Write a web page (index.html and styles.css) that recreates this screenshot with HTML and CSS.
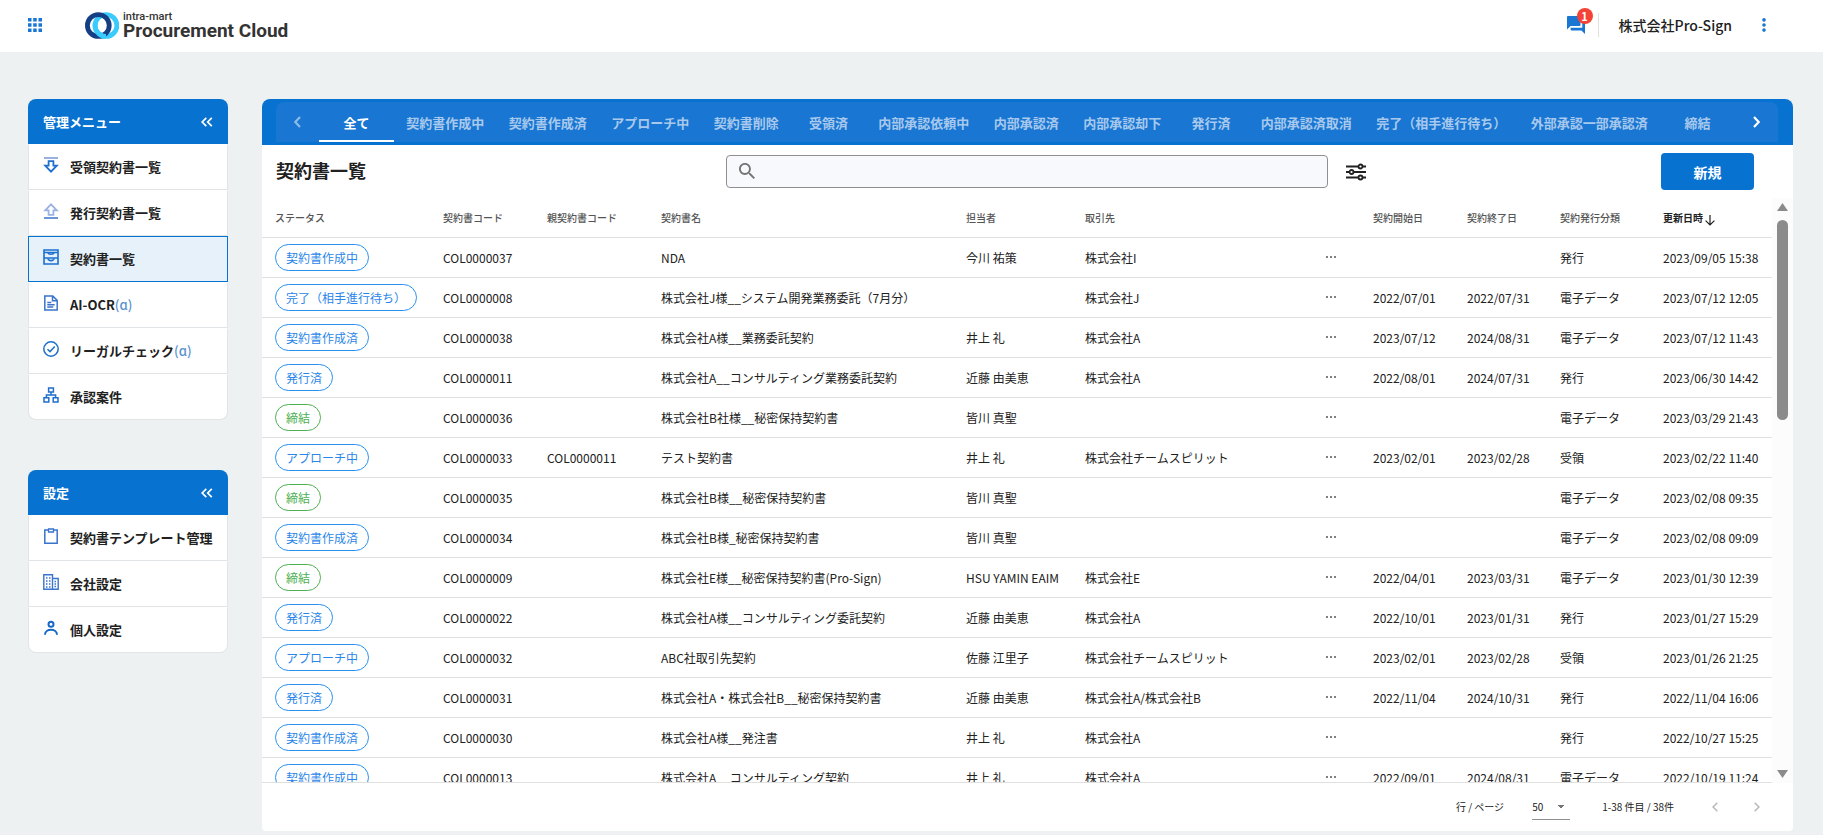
FILE: index.html
```html
<!DOCTYPE html>
<html lang="ja">
<head>
<meta charset="utf-8">
<meta name="viewport" content="width=device-width, initial-scale=1">
<title>契約書一覧 - Procurement Cloud</title>
<link rel="stylesheet" href="styles.css">
</head>
<body>
<header class="topbar">
  <button class="icon-btn" type="button" aria-label="アプリ一覧">
    <svg width="14" height="14" viewBox="0 0 14 14" fill="#1976d2"><path d="M0 0h3.5v3.5H0zM5.2 0h3.5v3.5H5.2zM10.5 0H14v3.5h-3.5zM0 5.2h3.5v3.5H0zM5.2 5.2h3.5v3.5H5.2zM10.5 5.2H14v3.5h-3.5zM0 10.5h3.5V14H0zM5.2 10.5h3.5V14H5.2zM10.5 10.5H14V14h-3.5z"/></svg>
  </button>
  <a class="brand" href="#">
    <svg width="34" height="27" viewBox="0 0 34 27" fill="none" stroke-width="4.800">
      <circle cx="21" cy="13.500" r="10.900" stroke="#3acbfd"/>
      <circle cx="13.300" cy="13.500" r="10.900" stroke="#153f85"/>
      <path d="M10.500 10.500A10.900 10.900 0 0 0 21 24.400" stroke="#3acbfd"/>
    </svg>
    <span class="brand-text"><span class="brand-sub">intra-mart</span><span class="brand-name">Procurement Cloud</span></span>
  </a>
  <div class="account">
    <button class="icon-btn messages" type="button" aria-label="メッセージ 1件">
      <svg width="18" height="18" viewBox="2 2 20 20" fill="#1976d2"><path d="M21 6h-2v9H6v2c0 .55.45 1 1 1h11l4 4V7c0-.55-.45-1-1-1zm-4 6V3c0-.55-.45-1-1-1H3c-.55 0-1 .45-1 1v14l4-4h10c.55 0 1-.45 1-1z"/></svg>
      <span class="badge">1</span>
    </button>
    <span class="company">株式会社Pro-Sign</span>
    <button class="icon-btn" type="button" aria-label="メニュー">
      <svg width="4" height="14" viewBox="0 0 4 14" fill="#1976d2"><circle cx="2" cy="1.9" r="1.8"/><circle cx="2" cy="7" r="1.8"/><circle cx="2" cy="12.1" r="1.8"/></svg>
    </button>
  </div>
</header>

<div class="layout">
  <aside class="sidebar">
    <nav class="menu" aria-label="管理メニュー">
      <div class="menu-head"><span>管理メニュー</span>
        <button class="icon-btn" type="button" aria-label="折りたたむ"><svg width="12" height="10" viewBox="0 0 12 10" fill="none" stroke="#fff" stroke-width="1.7"><path d="M5.3.8 1.2 5l4.1 4.2M10.8.8 6.7 5l4.1 4.2"/></svg></button>
      </div>
      <a class="menu-item" href="#">
        <svg class="ico" viewBox="0 0 16 16" fill="none" stroke="#1f6fd0" stroke-width="1.8"><path d="M1 1h14" stroke="#8fa9dc"/><path d="M5.6 4.200h4.8v4.4h3.4L8 14.6 2.2 8.600h3.400z"/></svg>
        <span>受領契約書一覧</span></a>
      <a class="menu-item" href="#">
        <svg class="ico" viewBox="0 0 16 16" fill="none" stroke="#9bb3e2" stroke-width="1.8"><path d="M1 15h14" stroke="#5c8ad4"/><path d="M5.600 11.800h4.800V7.400h3.400L8 1.400 2.200 7.400h3.400z"/></svg>
        <span>発行契約書一覧</span></a>
      <a class="menu-item is-active" href="#" aria-current="page">
        <svg class="ico" viewBox="0 0 16 16" fill="none" stroke="#1d6fd0" stroke-width="1.600"><path d="M1 1h14v14H1zM1 3.500h14M1 9h14"/><path d="M5 3.500c.3 2.400 5.700 2.400 6 0M5 9.500c.3 2.800 5.700 2.800 6 0"/></svg>
        <span>契約書一覧</span></a>
      <a class="menu-item" href="#">
        <svg class="ico" viewBox="0 0 16 16" fill="none" stroke="#3a74cc" stroke-width="1.500"><path d="M1.800 1h8l4.400 4.400V15H1.800zM9.500 1v4.700h4.700M4.300 7.500h4M4.300 9.800h7.400M4.300 12.100h6"/></svg>
        <span>AI-OCR<span class="alpha">(ɑ)</span></span></a>
      <a class="menu-item" href="#">
        <svg class="ico" viewBox="0 0 16 16" fill="none" stroke="#1f6fcb" stroke-width="1.500"><circle cx="8" cy="8" r="7.200"/><path d="M4.500 8.200 7 10.600l4.800-5"/></svg>
        <span>リーガルチェック<span class="alpha">(ɑ)</span></span></a>
      <a class="menu-item" href="#">
        <svg class="ico" viewBox="0 0 16 16" fill="none" stroke="#1f6fcb" stroke-width="1.500"><path d="M5.600 1h4.800v4H5.600zM1 10.800h4.800V15H1zM10.200 10.800H15V15h-4.800zM8 5v2.900M3.400 10.800V7.900h9.200v2.900"/></svg>
        <span>承認案件</span></a>
    </nav>
    <nav class="menu" aria-label="設定">
      <div class="menu-head"><span>設定</span>
        <button class="icon-btn" type="button" aria-label="折りたたむ"><svg width="12" height="10" viewBox="0 0 12 10" fill="none" stroke="#fff" stroke-width="1.7"><path d="M5.3.8 1.2 5l4.1 4.2M10.8.8 6.7 5l4.1 4.2"/></svg></button>
      </div>
      <a class="menu-item" href="#">
        <svg class="ico" viewBox="0 0 16 16" fill="none" stroke="#3a74cc" stroke-width="1.500"><path d="M5.500 2H1.800v13.200h12.400V2h-3.700"/><path d="M5.500 1h5v3h-5z" stroke-width="1.300"/></svg>
        <span>契約書テンプレート管理</span></a>
      <a class="menu-item" href="#">
        <svg class="ico" viewBox="0 0 16 16" fill="none" stroke="#3a74cc" stroke-width="1.400"><path d="M.8.8h8.700v14.400H.8zM9.500 4.500h5.700v10.700H9.500"/><path d="M3 4h1.500M6 4h1.500M3 7h1.500M6 7h1.500M3 10h1.500M6 10h1.500M3 13h1.500M6 13h1.500M11.500 7.500H13M11.500 10H13M11.500 12.500H13"/></svg>
        <span>会社設定</span></a>
      <a class="menu-item" href="#">
        <svg class="ico" viewBox="0 0 16 16" fill="none" stroke="#1668c4" stroke-width="2"><circle cx="8" cy="4.300" r="2.500"/><path d="M2 14.800c0-6.700 12-6.700 12 0"/></svg>
        <span>個人設定</span></a>
    </nav>
  </aside>

  <main class="panel">
    <div class="tabs-frame">
      <div class="tabs">
        <button class="tab-scroll is-off" type="button" aria-label="前のタブ"><svg width="7" height="12" viewBox="0 0 7 12" fill="none" stroke="#fff" stroke-width="2.200"><path d="M6 1 1.300 6 6 11"/></svg></button>
        <div class="tab-list" role="tablist">
          <button class="tab is-selected" type="button" role="tab" aria-selected="true">全て</button>
          <button class="tab" type="button" role="tab">契約書作成中</button>
          <button class="tab" type="button" role="tab">契約書作成済</button>
          <button class="tab" type="button" role="tab">アプローチ中</button>
          <button class="tab" type="button" role="tab">契約書削除</button>
          <button class="tab" type="button" role="tab">受領済</button>
          <button class="tab" type="button" role="tab">内部承認依頼中</button>
          <button class="tab" type="button" role="tab">内部承認済</button>
          <button class="tab" type="button" role="tab">内部承認却下</button>
          <button class="tab" type="button" role="tab">発行済</button>
          <button class="tab" type="button" role="tab">内部承認済取消</button>
          <button class="tab" type="button" role="tab">完了（相手進行待ち）</button>
          <button class="tab" type="button" role="tab">外部承認一部承認済</button>
          <button class="tab" type="button" role="tab">締結</button>
        </div>
        <button class="tab-scroll" type="button" aria-label="次のタブ"><svg width="7" height="12" viewBox="0 0 7 12" fill="none" stroke="#fff" stroke-width="2.200"><path d="M1 1l4.700 5L1 11"/></svg></button>
      </div>
    </div>

    <div class="toolbar">
      <h1 class="title">契約書一覧</h1>
      <div class="search-group">
        <label class="search">
          <svg width="16" height="16" viewBox="3 3 17.500 17.500" fill="#757575"><path d="M15.500 14h-.79l-.28-.27C15.410 12.590 16 11.110 16 9.500 16 5.910 13.090 3 9.500 3S3 5.910 3 9.500 5.910 16 9.500 16c1.610 0 3.090-.59 4.230-1.570l.27.28v.79l5 4.990L20.490 19l-4.990-5zm-6 0C7.010 14 5 11.990 5 9.500S7.010 5 9.500 5 14 7.010 14 9.500 11.990 14 9.500 14z"/></svg>
          <input class="search-input" type="search" aria-label="検索">
        </label>
        <button class="icon-btn" type="button" aria-label="絞り込み">
          <svg width="20" height="18" viewBox="0 0 20 18" fill="#fff" stroke="#212121" stroke-width="1.800"><path d="M0 3.500h20M0 9h20M0 14.500h20"/><circle cx="14.500" cy="3.500" r="2"/><circle cx="5.500" cy="9" r="2"/><circle cx="14.500" cy="14.500" r="2"/></svg>
        </button>
      </div>
      <div class="toolbar-end"><button class="new-btn" type="button">新規</button></div>
    </div>

    <div class="grid-area">
      <div class="grid-view">
      <table class="grid">
        <colgroup><col class="c-status"><col class="c-code"><col class="c-parent"><col class="c-name"><col class="c-person"><col class="c-partner"><col class="c-more"><col class="c-start"><col class="c-end"><col class="c-type"><col class="c-updated"></colgroup>
        <thead><tr><th>ステータス</th><th>契約書コード</th><th>親契約書コード</th><th>契約書名</th><th>担当者</th><th>取引先</th><th></th><th>契約開始日</th><th>契約終了日</th><th>契約発行分類</th><th class="sorted" aria-sort="descending">更新日時<svg class="sort" width="10" height="11" viewBox="0 0 10 11" fill="none" stroke="#212121" stroke-width="1.200"><path d="M5 0v10M.6 5.600 5 10l4.400-4.400"/></svg></th></tr></thead>
        <tbody>
          <tr><td><span class="chip">契約書作成中</span></td><td>COL0000037</td><td></td><td>NDA</td><td>今川 祐策</td><td>株式会社I</td><td><button class="more" type="button" aria-label="詳細"></button></td><td></td><td></td><td>発行</td><td>2023/09/05 15:38</td></tr>
          <tr><td><span class="chip">完了（相手進行待ち）</span></td><td>COL0000008</td><td></td><td>株式会社J様__システム開発業務委託（7月分）</td><td></td><td>株式会社J</td><td><button class="more" type="button" aria-label="詳細"></button></td><td>2022/07/01</td><td>2022/07/31</td><td>電子データ</td><td>2023/07/12 12:05</td></tr>
          <tr><td><span class="chip">契約書作成済</span></td><td>COL0000038</td><td></td><td>株式会社A様__業務委託契約</td><td>井上 礼</td><td>株式会社A</td><td><button class="more" type="button" aria-label="詳細"></button></td><td>2023/07/12</td><td>2024/08/31</td><td>電子データ</td><td>2023/07/12 11:43</td></tr>
          <tr><td><span class="chip">発行済</span></td><td>COL0000011</td><td></td><td>株式会社A__コンサルティング業務委託契約</td><td>近藤 由美恵</td><td>株式会社A</td><td><button class="more" type="button" aria-label="詳細"></button></td><td>2022/08/01</td><td>2024/07/31</td><td>発行</td><td>2023/06/30 14:42</td></tr>
          <tr><td><span class="chip is-done">締結</span></td><td>COL0000036</td><td></td><td>株式会社B社様__秘密保持契約書</td><td>皆川 真聖</td><td></td><td><button class="more" type="button" aria-label="詳細"></button></td><td></td><td></td><td>電子データ</td><td>2023/03/29 21:43</td></tr>
          <tr><td><span class="chip">アプローチ中</span></td><td>COL0000033</td><td>COL0000011</td><td>テスト契約書</td><td>井上 礼</td><td>株式会社チームスピリット</td><td><button class="more" type="button" aria-label="詳細"></button></td><td>2023/02/01</td><td>2023/02/28</td><td>受領</td><td>2023/02/22 11:40</td></tr>
          <tr><td><span class="chip is-done">締結</span></td><td>COL0000035</td><td></td><td>株式会社B様__秘密保持契約書</td><td>皆川 真聖</td><td></td><td><button class="more" type="button" aria-label="詳細"></button></td><td></td><td></td><td>電子データ</td><td>2023/02/08 09:35</td></tr>
          <tr><td><span class="chip">契約書作成済</span></td><td>COL0000034</td><td></td><td>株式会社B様_秘密保持契約書</td><td>皆川 真聖</td><td></td><td><button class="more" type="button" aria-label="詳細"></button></td><td></td><td></td><td>電子データ</td><td>2023/02/08 09:09</td></tr>
          <tr><td><span class="chip is-done">締結</span></td><td>COL0000009</td><td></td><td>株式会社E様__秘密保持契約書(Pro-Sign)</td><td>HSU YAMIN EAIM</td><td>株式会社E</td><td><button class="more" type="button" aria-label="詳細"></button></td><td>2022/04/01</td><td>2023/03/31</td><td>電子データ</td><td>2023/01/30 12:39</td></tr>
          <tr><td><span class="chip">発行済</span></td><td>COL0000022</td><td></td><td>株式会社A様__コンサルティング委託契約</td><td>近藤 由美恵</td><td>株式会社A</td><td><button class="more" type="button" aria-label="詳細"></button></td><td>2022/10/01</td><td>2023/01/31</td><td>発行</td><td>2023/01/27 15:29</td></tr>
          <tr><td><span class="chip">アプローチ中</span></td><td>COL0000032</td><td></td><td>ABC社取引先契約</td><td>佐藤 江里子</td><td>株式会社チームスピリット</td><td><button class="more" type="button" aria-label="詳細"></button></td><td>2023/02/01</td><td>2023/02/28</td><td>受領</td><td>2023/01/26 21:25</td></tr>
          <tr><td><span class="chip">発行済</span></td><td>COL0000031</td><td></td><td>株式会社A・株式会社B__秘密保持契約書</td><td>近藤 由美恵</td><td>株式会社A/株式会社B</td><td><button class="more" type="button" aria-label="詳細"></button></td><td>2022/11/04</td><td>2024/10/31</td><td>発行</td><td>2022/11/04 16:06</td></tr>
          <tr><td><span class="chip">契約書作成済</span></td><td>COL0000030</td><td></td><td>株式会社A様__発注書</td><td>井上 礼</td><td>株式会社A</td><td><button class="more" type="button" aria-label="詳細"></button></td><td></td><td></td><td>発行</td><td>2022/10/27 15:25</td></tr>
          <tr><td><span class="chip">契約書作成中</span></td><td>COL0000013</td><td></td><td>株式会社A__コンサルティング契約</td><td>井上 礼</td><td>株式会社A</td><td><button class="more" type="button" aria-label="詳細"></button></td><td>2022/09/01</td><td>2024/08/31</td><td>電子データ</td><td>2022/10/19 11:24</td></tr>
        </tbody>
      </table>
      </div>
      <div class="scrollbar" aria-hidden="true">
        <svg width="11" height="8" viewBox="0 0 11 8" fill="#8b8b8b"><path d="M5.500 0 11 8H0z"/></svg>
        <div class="track"><div class="thumb"></div></div>
        <svg width="11" height="8" viewBox="0 0 11 8" fill="#8b8b8b"><path d="M5.500 8 0 0h11z"/></svg>
      </div>
    </div>

    <footer class="pager">
      <label for="rows">行 / ページ</label>
      <select class="rows" id="rows"><option>50</option><option>100</option></select>
      <span class="range">1-38 件目 / 38件</span>
      <button class="icon-btn" type="button" disabled aria-label="前のページ"><svg width="6" height="10" viewBox="0 0 6 10" fill="none" stroke="#b8b8b8" stroke-width="1.500"><path d="M5.300.7 1 5l4.300 4.300"/></svg></button>
      <button class="icon-btn next" type="button" disabled aria-label="次のページ"><svg width="6" height="10" viewBox="0 0 6 10" fill="none" stroke="#b8b8b8" stroke-width="1.500"><path d="M.7.7 5 5 .7 9.300"/></svg></button>
    </footer>
  </main>
</div>
</body>
</html>
```

FILE: styles.css
```css
* { box-sizing: border-box; }

body {
  margin: 0;
  height: 100vh;
  display: flex;
  flex-direction: column;
  background: #edf1f2;
  color: #212121;
  font-family: "Noto Sans CJK JP", sans-serif;
  font-size: 12px;
  line-height: 16px;
}

button, input, select { font: inherit; color: inherit; }
svg { display: block; flex: none; }

.icon-btn {
  display: flex;
  align-items: center;
  padding: 0;
  border: 0;
  background: none;
}

/* Top bar */
.topbar {
  flex: none;
  display: flex;
  align-items: center;
  height: 52px;
  padding: 0 57px 2px 28px;
  background: #fff;
}
.brand {
  display: flex;
  align-items: center;
  gap: 4px;
  margin-left: 43px;
  color: #333;
  text-decoration: none;
  font-family: Roboto, sans-serif;
  font-weight: 700;
}
.brand-text { display: flex; flex-direction: column; }
.brand-sub { font-size: 11px; font-weight: 500; line-height: 11px; }
.brand-name { font-size: 19px; line-height: 18px; }
.account {
  display: flex;
  align-items: center;
  margin-left: auto;
}
.messages { position: relative; }
.badge {
  position: absolute;
  top: -8px;
  right: -8px;
  width: 16px;
  height: 16px;
  border-radius: 8px;
  background: #f44336;
  color: #fff;
  font-size: 11px;
  font-weight: 700;
}
.company {
  margin: 0 30px 0 13px;
  padding-left: 20px;
  border-left: 1px solid #e0e0e0;
  font-size: 14px;
  font-weight: 500;
  line-height: 24px;
}

/* Page layout */
.layout {
  flex: 1;
  min-height: 0;
  display: flex;
  gap: 34px;
  padding: 47px 30px 4px 28px;
}
.sidebar {
  flex: none;
  display: flex;
  flex-direction: column;
  gap: 50px;
  width: 200px;
}

/* Side menus */
.menu-head {
  display: flex;
  align-items: center;
  justify-content: space-between;
  height: 45px;
  padding: 0 15px;
  border-radius: 8px 8px 0 0;
  background: #0772d0;
  color: #fff;
  font-size: 13px;
  font-weight: 700;
}
.menu-item {
  display: flex;
  align-items: center;
  gap: 11px;
  height: 46px;
  padding: 0 14px;
  border: 1px solid #e2e5e7;
  border-top-color: transparent;
  background: #fff;
  color: #212121;
  font-size: 13px;
  font-weight: 700;
  text-decoration: none;
  white-space: nowrap;
}
.menu-item:last-child { border-radius: 0 0 8px 8px; }
.menu-item.is-active {
  border-color: #0772d0;
  background: #e7f1fa;
}
.ico { width: 16px; height: 16px; margin-bottom: 5px; }
.alpha { color: #5b93d0; font-weight: 500; }

/* Main panel */
.panel {
  flex: 1;
  min-width: 0;
  display: flex;
  flex-direction: column;
  border-radius: 8px 8px 4px 4px;
  background: #fff;
}
.tabs-frame {
  flex: none;
  padding: 3px 15px 3px 14px;
  border-radius: 8px 8px 0 0;
  background: #0772d0;
}
.tabs {
  display: flex;
  height: 40px;
  border-radius: 8px 8px 0 0;
  background: #1976d2;
}
.tab-scroll {
  flex: none;
  display: flex;
  align-items: center;
  justify-content: center;
  width: 43px;
  padding: 0;
  border: 0;
  background: none;
}
.tab-scroll.is-off { opacity: .5; }
.tab-list {
  flex: 1;
  min-width: 0;
  display: flex;
  overflow: hidden;
}
.tab {
  flex: 1 0 auto;
  min-width: 75px;
  padding: 4px 12px 0;
  border: 0;
  border-bottom: 2px solid transparent;
  background: none;
  color: #a8c9ed;
  font-size: 13px;
  font-weight: 700;
}
.tab.is-selected { flex-grow: 0; border-color: #fff; color: #fff; }

/* Toolbar */
.toolbar {
  flex: none;
  display: grid;
  grid-template-columns: 450fr 640fr 388fr;
  align-items: center;
  height: 53px;
  padding: 0 39px 0 14px;
}
.title { margin: 0; padding-bottom: 4px; font-size: 18px; font-weight: 700; line-height: 24px; }
.search-group { display: flex; align-items: center; gap: 18px; }
.search {
  flex: 1;
  display: flex;
  align-items: center;
  gap: 8px;
  height: 33px;
  padding: 0 12px 2px;
  border: 1px solid #8f8f8f;
  border-radius: 4px;
  background: #f8f9fc;
}
.search-input { flex: 1; min-width: 0; padding: 0; border: 0; outline: 0; background: none; }
.toolbar-end { display: flex; justify-content: flex-end; }
.new-btn {
  width: 93px;
  height: 37px;
  padding: 0;
  border: 0;
  border-radius: 4px;
  background: #0772d0;
  color: #fff;
  font-size: 14px;
  font-weight: 700;
}

/* Contract table */
.grid-area { flex: 1; min-height: 0; display: flex; }
.grid-view { flex: 1; min-width: 0; overflow: hidden; border-bottom: 1px solid #e0e0e0; }
.grid { width: 100%; table-layout: fixed; border-collapse: separate; border-spacing: 0; }
.grid th, .grid td {
  height: 40px;
  padding: 0 0 0 13px;
  border-bottom: 1px solid #e0e0e0;
  text-align: left;
  white-space: nowrap;
}
.grid th { color: #555; font-size: 10px; font-weight: 500; }
.grid th.sorted { color: #212121; font-weight: 700; }
.sort { display: inline-block; margin-left: 2px; vertical-align: -4px; }
.c-status { width: 168px; }
.c-code { width: 104px; }
.c-parent { width: 114px; }
.c-name { width: 305px; }
.c-person { width: 119px; }
.c-partner { width: 241px; }
.c-more { width: 47px; }
.c-start { width: 94px; }
.c-end { width: 93px; }
.c-type { width: 103px; }
.c-updated { width: 122px; }
.chip {
  display: inline-block;
  padding: 0 10px;
  border: 1px solid #2a90f0;
  border-radius: 14px;
  color: #2a86e8;
  line-height: 25px;
}
.chip.is-done { border-color: #4caf50; color: #4caf50; }
.more {
  display: block;
  width: 10px;
  height: 2px;
  margin-bottom: 2px;
  padding: 0;
  border: 0;
  background: repeating-linear-gradient(90deg, #808080 0 2px, transparent 2px 4px);
}

.scrollbar {
  flex: none;
  display: flex;
  flex-direction: column;
  align-items: center;
  gap: 9px;
  width: 21px;
  padding: 5px 0;
  background: #fcfcfc;
}
.track { flex: 1; width: 11px; }
.thumb { height: 37%; border-radius: 6px; background: #8b8b8b; }

/* Pager */
.pager {
  flex: none;
  display: flex;
  align-items: center;
  justify-content: flex-end;
  height: 48px;
  padding: 0 33px;
  font-size: 10px;
}
.rows {
  appearance: none;
  width: 38px;
  height: 26px;
  margin: 0 32px 0 28px;
  padding: 0;
  border: 0;
  border-bottom: 1px solid #8f8f8f;
  border-radius: 0;
  background:
    linear-gradient(to bottom right, #757575 50%, transparent 50%) right 5px center / 4px 4px no-repeat,
    linear-gradient(to bottom left, #757575 50%, transparent 50%) right 9px center / 4px 4px no-repeat;
}
.range { margin-right: 38px; }
.next { margin-left: 36px; }
```
